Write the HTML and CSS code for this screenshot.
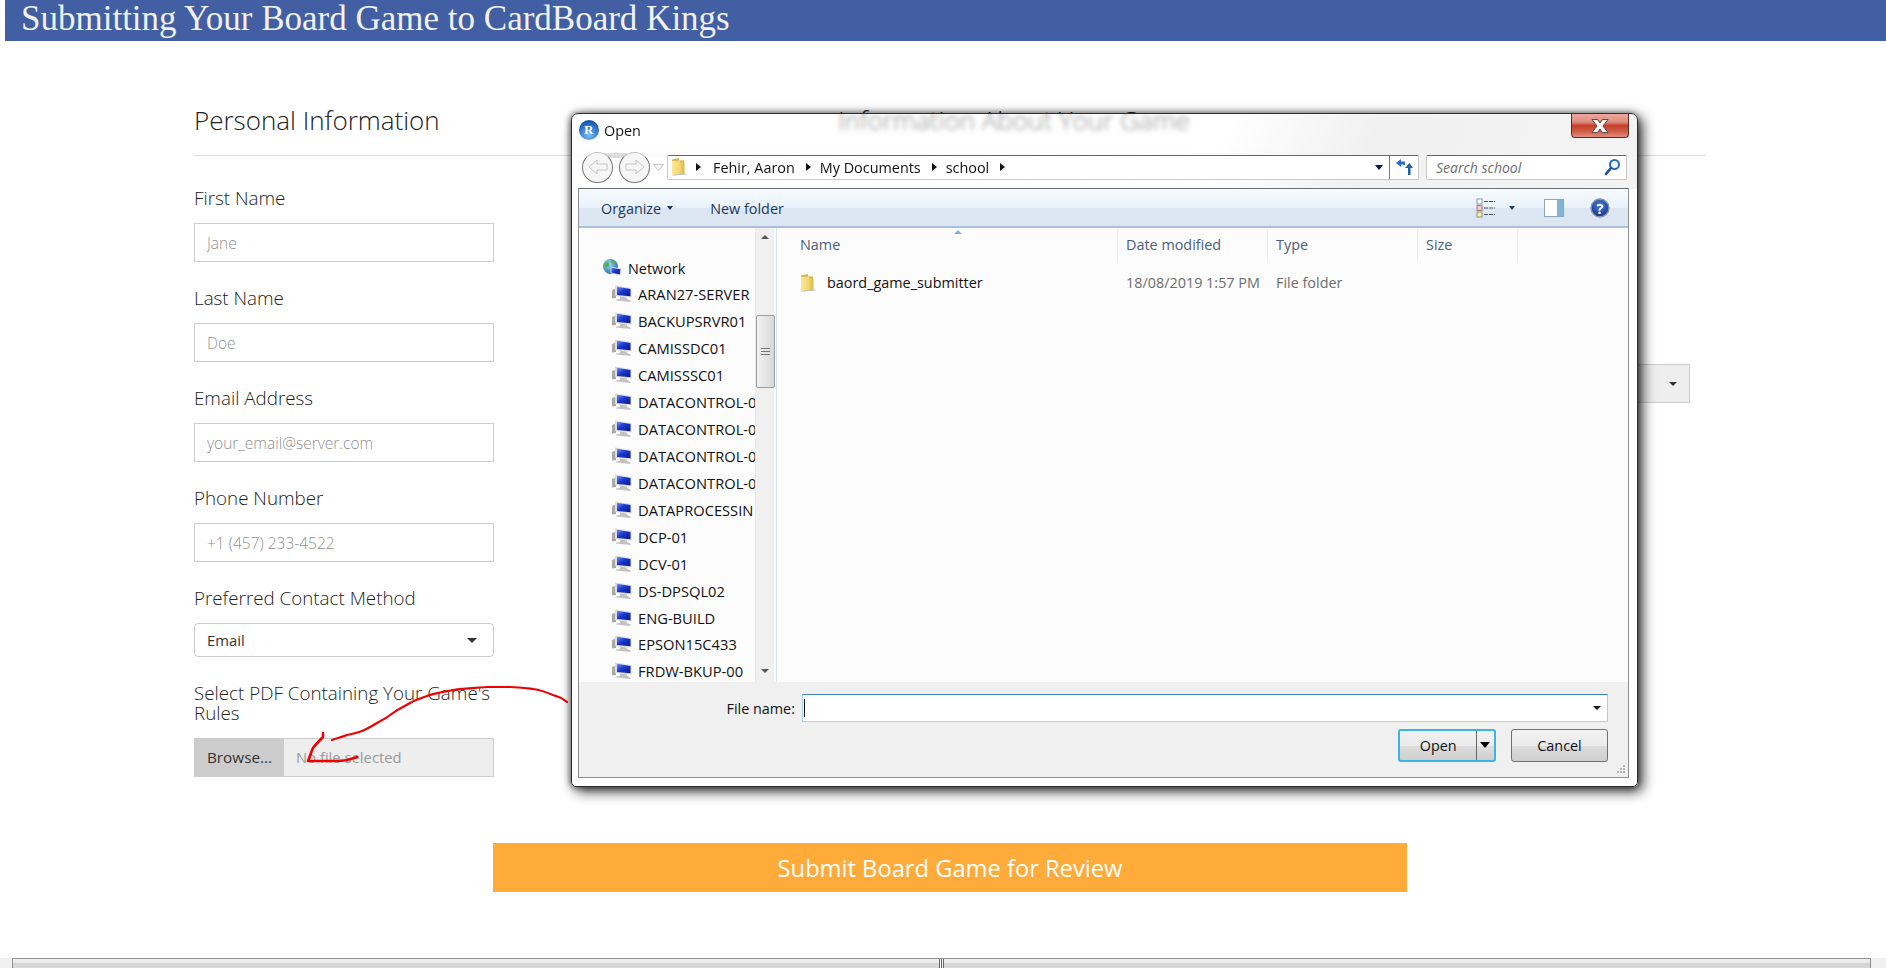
FILE: index.html
```html
<!DOCTYPE html>
<html lang="en">
<head>
    <meta charset="UTF-8">
    <meta name="viewport" content="width=device-width, initial-scale=1.0">
    <title>Submitting Your Board Game to CardBoard Kings</title>
    <link rel="stylesheet" href="styles.css">
</head>
<body>

    <!-- shared icons -->
    <svg class="icon-defs" width="0" height="0" aria-hidden="true">
        <defs>
            <linearGradient id="folderFill" x1="0" y1="0" x2="1" y2="0">
                <stop offset="0" stop-color="#fbe89a"/>
                <stop offset="0.6" stop-color="#f3d76f"/>
                <stop offset="1" stop-color="#d9b64a"/>
            </linearGradient>
            <linearGradient id="screenFill" x1="0" y1="0" x2="1" y2="1">
                <stop offset="0" stop-color="#6f8df0"/>
                <stop offset="0.45" stop-color="#1a36d0"/>
                <stop offset="1" stop-color="#081a80"/>
            </linearGradient>
            <radialGradient id="helpFill" cx="0.5" cy="0.35" r="0.7">
                <stop offset="0" stop-color="#4a7fd8"/>
                <stop offset="1" stop-color="#12308a"/>
            </radialGradient>
            <radialGradient id="globeFill" cx="0.4" cy="0.35" r="0.7">
                <stop offset="0" stop-color="#9fd7f5"/>
                <stop offset="1" stop-color="#1c6fb0"/>
            </radialGradient>
            <symbol id="folder" viewBox="1 1 17 18">
                <path d="M2 2.5 L9 1 L9 3.5 L14 3.5 L14 17 L2 18.5 Z" fill="#d8b44c"/>
                <path d="M2 4 L10 3.5 L10 5.5 L14.5 5.5 L14.5 16.5 L3.5 18.5 L2 18.5 Z" fill="url(#folderFill)"/>
                <path d="M4 18.5 L17.5 17.5 L14.5 16 L4 17.5 Z" fill="#bdbdbd" opacity="0.8"/>
            </symbol>
            <symbol id="computer" viewBox="0 0 20 18">
                <path d="M0 5 L4 3.5 L4 13 L0 13.5 Z" fill="#a9a9a9"/>
                <path d="M3 0.5 L19.5 3 L19.5 12.5 L3 11 Z" fill="#dcdcdc"/>
                <path d="M5 1.8 L18.5 4 L18.5 11.3 L5 10 Z" fill="url(#screenFill)"/>
                <path d="M8 11.5 L15 12.5 L15 14 L18.5 15.5 L18.5 17 L4 15.5 L4 14.5 L8 14 Z" fill="#c2c2c2"/>
            </symbol>
        </defs>
    </svg>

    <header class="site-header">
        <h1>Submitting Your Board Game to CardBoard Kings</h1>
    </header>

    <main class="container">
        <div class="columns">
            <section class="column">
                <h4>Personal Information</h4>
                <div class="fields">
                    <div class="field">
                        <label for="first_name">First Name</label>
                        <input type="text" id="first_name" placeholder="Jane">
                    </div>
                    <div class="field">
                        <label for="last_name">Last Name</label>
                        <input type="text" id="last_name" placeholder="Doe">
                    </div>
                    <div class="field">
                        <label for="email">Email Address</label>
                        <input type="text" id="email" placeholder="your_email@server.com">
                    </div>
                    <div class="field">
                        <label for="phone">Phone Number</label>
                        <input type="text" id="phone" placeholder="+1 (457) 233-4522">
                    </div>
                    <div class="field">
                        <label>Preferred Contact Method</label>
                        <div class="select-box">Email<span class="caret"></span></div>
                    </div>
                    <div class="field">
                        <label class="short">Select PDF Containing Your Game's Rules</label>
                        <div class="file-box">
                            <span class="file-button">Browse...</span>
                            <span class="file-name">No file selected</span>
                        </div>
                    </div>
                </div>
            </section>

            <section class="column column-right">
                <h4>Information About Your Game</h4>
                <div class="fields">
                    <div class="select-box select-disabled"><span class="caret"></span></div>
                </div>
            </section>
        </div>

        <button type="button" class="submit-button">Submit Board Game for Review</button>
    </main>

    <div class="page-scrollbar">
        <div class="page-scrollbar-thumb"><span class="grip"></span></div>
    </div>

    <!-- red pen marks drawn on the screenshot -->
    <svg class="pen-marks" width="580" height="790" viewBox="0 0 580 790" aria-hidden="true">
        <path d="M567 702 C562 698 557 696 553 695 C546 692 540 690 533 689 C525 688 518 687 510 687 C502 687 495 687 487 687 C476 688 465 688 453 690 C444 692 435 693 427 696 C421 698 415 700 410 703 C404 707 399 708 393 713 C388 717 383 720 377 723 C372 726 367 729 362 731 C357 733 352 734 347 735 C342 737 337 738 332 740" fill="none" stroke="#f00000" stroke-width="2.2" stroke-linecap="round"/>
        <path d="M323 733 L323 737 C319 741 316 744 313 748 C311 752 310 757 308 761 C315 761 323 761 330 761 C336 761 342 761 347 760 C351 759 354 758 357 757" fill="none" stroke="#f00000" stroke-width="2.6" stroke-linecap="round" stroke-linejoin="round"/>
    </svg>

    <!-- the Windows file dialog that lies over the form -->
    <div class="dialog">
        <div class="dialog-title">
            <span class="r-logo">R</span>
            <span class="dialog-name">Open</span>
            <span class="close-button">
                <svg width="20" height="16" viewBox="0 0 20 16">
                    <path d="M2 1.5 L7.5 1.5 L10 5 L12.5 1.5 L18 1.5 L13 8 L18 14.5 L12.5 14.5 L10 11 L7.5 14.5 L2 14.5 L7 8 Z" fill="#f4f4f4" stroke="#5a4a4a" stroke-width="1"/>
                </svg>
            </span>
        </div>

        <div class="dialog-nav">
            <div class="nav-buttons">
                <span class="nav-circle">
                    <svg width="22" height="18" viewBox="0 0 22 18"><path d="M10 2 L2 9 L10 16 L10 12 L20 12 L20 6 L10 6 Z" fill="#f7f7f7" stroke="#c4c4c4"/></svg>
                </span>
                <span class="nav-circle">
                    <svg width="22" height="18" viewBox="0 0 22 18"><path d="M12 2 L20 9 L12 16 L12 12 L2 12 L2 6 L12 6 Z" fill="#f7f7f7" stroke="#c4c4c4"/></svg>
                </span>
                <svg class="nav-history" width="11" height="7" viewBox="0 0 11 7"><path d="M0.5 0.5 L10.5 0.5 L5.5 6.5 Z" fill="#fafafa" stroke="#c4c4c4"/></svg>
            </div>
            <div class="address-bar">
                <svg class="crumb-folder" width="17" height="18"><use href="#folder"/></svg>
                <span class="crumb-arrow"></span>
                <span class="crumb">Fehir, Aaron</span>
                <span class="crumb-arrow"></span>
                <span class="crumb">My Documents</span>
                <span class="crumb-arrow"></span>
                <span class="crumb">school</span>
                <span class="crumb-arrow"></span>
                <span class="address-drop"></span>
                <span class="address-refresh">
                    <svg width="18" height="18" viewBox="0 0 18 18">
                        <path d="M1 5 L6 1 L6 3.5 L10 3.5 L10 7 L8 7 L8 6.5 L6 6.5 L6 9 Z" fill="#2a6fc0"/>
                        <path d="M13 17 L13 10 L10 10 L14.5 5 L18 10 L15.5 10 L15.5 17 Z" fill="#1f5fa8"/>
                    </svg>
                </span>
            </div>
            <div class="search-box">
                <span>Search school</span>
                <svg width="17" height="18" viewBox="0 0 17 18">
                    <circle cx="10.5" cy="6.5" r="4.5" fill="#f4f9ff" stroke="#2a6cb0" stroke-width="2"/>
                    <path d="M7 10 L2 16" stroke="#1d4f8a" stroke-width="2.6" stroke-linecap="round"/>
                </svg>
            </div>
        </div>

        <div class="dialog-panel">
            <div class="toolbar">
                <span class="tool">Organize<span class="tool-caret"></span></span>
                <span class="tool tool-new">New folder</span>
                <div class="toolbar-right">
                    <svg width="20" height="20" viewBox="0 0 20 20">
                        <rect x="1" y="1" width="5" height="5" fill="#fff" stroke="#8c9aac"/>
                        <rect x="1" y="7.5" width="5" height="5" fill="#f6c9c0" stroke="#a08080"/>
                        <rect x="1" y="14" width="5" height="5" fill="#f4efb0" stroke="#98986c"/>
                        <path d="M8 3.5 H19 M8 10 H19 M8 16.5 H19" stroke="#44566c" stroke-width="1.2" stroke-dasharray="4 1"/>
                    </svg>
                    <span class="tool-caret view-caret"></span>
                    <svg class="pane-icon" width="20" height="18" viewBox="0 0 20 18">
                        <rect x="0.5" y="0.5" width="19" height="17" fill="#fff" stroke="#8ca4bc"/>
                        <rect x="13" y="1" width="6" height="16" fill="#7fb6d8"/>
                    </svg>
                    <span class="help-icon">
                        <svg width="20" height="20" viewBox="0 0 20 20">
                            <circle cx="10" cy="10" r="9" fill="url(#helpFill)" stroke="#8d98a8" stroke-width="1.4"/>
                        </svg>
                        <span class="help-mark">?</span>
                    </span>
                </div>
            </div>

            <div class="browser">
                <div class="nav-pane">
                    <div class="nav-list">
                        <div class="nav-network">
                            <svg width="20" height="20" viewBox="0 0 20 20">
                                <circle cx="8.5" cy="8.5" r="7.5" fill="url(#globeFill)"/>
                                <path d="M3 5 C6 3 8 5 7 8 C5 10 3 9 2 7 Z M9 2 C12 2 14 4 13 6 C11 6 9 5 9 2 Z" fill="#4caf50"/>
                                <path d="M9 9 L19 11 L18 17 L9 15 Z" fill="url(#screenFill)" stroke="#d6d6d6"/>
                            </svg>
                            <span>Network</span>
                        </div>
                        <div class="nav-item"><svg width="20" height="18"><use href="#computer"/></svg><span>ARAN27-SERVER</span></div>
                        <div class="nav-item"><svg width="20" height="18"><use href="#computer"/></svg><span>BACKUPSRVR01</span></div>
                        <div class="nav-item"><svg width="20" height="18"><use href="#computer"/></svg><span>CAMISSDC01</span></div>
                        <div class="nav-item"><svg width="20" height="18"><use href="#computer"/></svg><span>CAMISSSC01</span></div>
                        <div class="nav-item"><svg width="20" height="18"><use href="#computer"/></svg><span>DATACONTROL-0</span></div>
                        <div class="nav-item"><svg width="20" height="18"><use href="#computer"/></svg><span>DATACONTROL-0</span></div>
                        <div class="nav-item"><svg width="20" height="18"><use href="#computer"/></svg><span>DATACONTROL-0</span></div>
                        <div class="nav-item"><svg width="20" height="18"><use href="#computer"/></svg><span>DATACONTROL-0</span></div>
                        <div class="nav-item"><svg width="20" height="18"><use href="#computer"/></svg><span>DATAPROCESSIN</span></div>
                        <div class="nav-item"><svg width="20" height="18"><use href="#computer"/></svg><span>DCP-01</span></div>
                        <div class="nav-item"><svg width="20" height="18"><use href="#computer"/></svg><span>DCV-01</span></div>
                        <div class="nav-item"><svg width="20" height="18"><use href="#computer"/></svg><span>DS-DPSQL02</span></div>
                        <div class="nav-item"><svg width="20" height="18"><use href="#computer"/></svg><span>ENG-BUILD</span></div>
                        <div class="nav-item"><svg width="20" height="18"><use href="#computer"/></svg><span>EPSON15C433</span></div>
                        <div class="nav-item"><svg width="20" height="18"><use href="#computer"/></svg><span>FRDW-BKUP-00</span></div>
                    </div>
                    <div class="nav-scroll">
                        <span class="scroll-up"></span>
                        <span class="scroll-thumb"><span class="grip-lines"></span></span>
                        <span class="scroll-down"></span>
                    </div>
                </div>

                <div class="file-pane">
                    <span class="sort-mark"></span>
                    <div class="file-columns file-head">
                        <span>Name</span>
                        <span>Date modified</span>
                        <span>Type</span>
                        <span>Size</span>
                    </div>
                    <div class="file-columns file-row">
                        <span class="file-title"><svg width="17" height="18"><use href="#folder"/></svg>baord_game_submitter</span>
                        <span>18/08/2019 1:57 PM</span>
                        <span>File folder</span>
                        <span></span>
                    </div>
                </div>
            </div>

            <div class="dialog-footer">
                <div class="name-row">
                    <span class="name-label">File name:</span>
                    <div class="name-input"><span class="text-cursor"></span><span class="name-drop"></span></div>
                </div>
                <div class="button-row">
                    <span class="win-button win-open"><span class="open-text">Open</span><span class="open-split"></span></span>
                    <span class="win-button win-cancel">Cancel</span>
                </div>
                <svg class="resize-grip" width="11" height="11" viewBox="0 0 11 11">
                    <path d="M9 1h2v2H9z M6 4h2v2H6z M9 4h2v2H9z M3 7h2v2H3z M6 7h2v2H6z M9 7h2v2H9z" fill="#b4b4b4"/>
                </svg>
            </div>
        </div>
    </div>

</body>
</html>
```

FILE: styles.css
```css
html, body {
    height: 100%;
}
body {
    margin: 0;
    padding-left: 5px;
    box-sizing: border-box;
    overflow: hidden;
    display: flex;
    flex-direction: column;
    position: relative;
    font-family: "Open Sans", Arial, sans-serif;
    color: #222;
    background-color: #fff;
}
.icon-defs {
    position: absolute;
}

/* page */
.site-header {
    height: 41px;
    flex: none;
    background-color: #415fa2;
}
h1 {
    margin: 0;
    padding-left: 16px;
    font-family: "Liberation Serif", "Times New Roman", serif;
    font-size: 35px;
    font-weight: 400;
    line-height: 37px;
    color: #f1f1f1;
}
.container {
    width: 1512px;
    margin: 64px 0 0 189px;
    flex: none;
}
.columns {
    display: grid;
    grid-template-columns: 644px 1fr;
}
h4 {
    margin: 0;
    height: 30px;
    padding-bottom: 20px;
    font-size: 26px;
    font-weight: 300;
    line-height: 30px;
    color: #222;
    border-bottom: 1px solid #ddd;
}
.fields {
    padding-top: 32px;
}
.field {
    width: 300px;
    margin-bottom: 26px;
}
label {
    display: block;
    margin-bottom: 15px;
    font-size: 18.8px;
    font-weight: 300;
    line-height: 20px;
    color: #222;
}
input {
    display: block;
    width: 100%;
    height: 39px;
    box-sizing: border-box;
    padding: 0 12px;
    border: 1.5px solid #ccc;
    border-radius: 0;
    background-color: #fff;
    font-family: "Open Sans", Arial, sans-serif;
    font-size: 15.5px;
    font-weight: 300;
    outline: none;
}
input::placeholder {
    color: #8f8f8f;
}
.select-box {
    height: 34px;
    box-sizing: border-box;
    padding: 0 12px;
    display: flex;
    align-items: center;
    justify-content: space-between;
    border: 1px solid #ccc;
    border-radius: 4px;
    font-size: 14.8px;
    color: #333;
}
.caret {
    width: 0;
    height: 0;
    margin-right: 4px;
    border-left: 5px solid transparent;
    border-right: 5px solid transparent;
    border-top: 5px solid #333;
}
.select-disabled {
    height: 39px;
    margin: 176px 16px 0 0;
    padding-right: 12px;
    border-radius: 0;
    justify-content: flex-end;
    background-color: #eee;
}
.select-disabled .caret {
    margin-right: 0;
    border-left-width: 4.5px;
    border-right-width: 4.5px;
    border-top-width: 4.5px;
}
.file-box {
    height: 39px;
    box-sizing: border-box;
    display: flex;
    border: 1px solid #ccc;
    background-color: #eee;
    font-size: 14.8px;
}
.file-button {
    width: 89px;
    padding-bottom: 2px;
    box-sizing: border-box;
    display: flex;
    align-items: center;
    justify-content: center;
    background-color: #ccc;
    color: #333;
    font-size: 15.3px;
}
.file-name {
    padding: 0 0 2px 12px;
    display: flex;
    align-items: center;
    color: #9a9a9a;
}
.submit-button {
    display: block;
    width: 914px;
    height: 49px;
    margin: 40px auto 0;
    padding: 0;
    border: none;
    background-color: #ffab3a;
    color: #fff;
    font-family: "Open Sans", Arial, sans-serif;
    font-size: 23.7px;
    font-weight: 400;
}
.page-scrollbar {
    height: 10px;
    flex: none;
    margin: auto 0 0 -5px;
    padding: 0 15px 0 12px;
    background-color: #f0f0f0;
}
.page-scrollbar-thumb {
    height: 10px;
    box-sizing: border-box;
    border: 1px solid #8f8f8f;
    border-bottom: 0;
    background: linear-gradient(#f0f0f0 0, #e8e8e8 45%, #d6d6d6 46%, #d6d6d6 100%);
    display: flex;
    justify-content: center;
}
.grip {
    width: 5px;
    height: 9px;
    background: repeating-linear-gradient(90deg, #666 0 1px, #f4f4f4 1px 2px);
}
.pen-marks {
    position: absolute;
    left: 0;
    top: 0;
    pointer-events: none;
}

/* file dialog */
.dialog {
    position: absolute;
    left: 571px;
    top: 113px;
    width: 1067px;
    height: 674px;
    box-sizing: border-box;
    padding: 0 8px 0 6px;
    border: 1px solid #2e2e2e;
    border-radius: 7px 7px 5px 5px;
    box-shadow: 4px 4px 13px rgba(0, 0, 0, 0.85), -1px 0 6px rgba(0, 0, 0, 0.5);
    backdrop-filter: blur(2.5px);
    background:
        linear-gradient(113deg, rgba(255, 255, 255, 0.45) 0, rgba(255, 255, 255, 0.5) 60%, rgba(238, 238, 238, 0.85) 74%, rgba(242, 242, 242, 0.85) 100%) 0 0 / 100% 75px no-repeat,
        linear-gradient(#fff, #fff) 0 75px / 100% 100% no-repeat;
    font-size: 14.4px;
    color: #111;
}
.dialog-title {
    height: 37px;
    display: flex;
    align-items: flex-start;
}
.r-logo {
    width: 20px;
    height: 20px;
    margin: 6px 0 0 1px;
    border-radius: 50%;
    background: radial-gradient(circle at 50% 75%, #7cc0f5, #1257b8 75%);
    color: #fff;
    font-family: "Liberation Serif", serif;
    font-size: 13px;
    font-weight: 700;
    line-height: 20px;
    text-align: center;
}
.dialog-name {
    margin: 7px 0 0 5px;
    line-height: 20px;
}
.close-button {
    width: 58px;
    height: 24px;
    margin-left: auto;
    box-sizing: border-box;
    display: flex;
    align-items: center;
    justify-content: center;
    border: 1px solid #5c2a22;
    border-top: 0;
    border-radius: 0 0 4px 4px;
    background: linear-gradient(#eea99c 0, #dd8d7e 35%, #c8402a 50%, #d05a45 75%, #e08f7f 100%);
}
.dialog-nav {
    height: 32px;
    display: flex;
    align-items: center;
}
.nav-buttons {
    position: relative;
    width: 89px;
    padding-left: 4px;
    box-sizing: border-box;
    display: flex;
    align-items: center;
    gap: 6px;
}
.nav-buttons::before {
    content: "";
    position: absolute;
    left: 18px;
    top: 1px;
    width: 34px;
    height: 5px;
    border-radius: 5px 5px 0 0;
    background-color: #dcdcdc;
}
.nav-circle {
    position: relative;
    width: 31px;
    height: 31px;
    box-sizing: border-box;
    display: flex;
    align-items: center;
    justify-content: center;
    border: 1.5px solid #777;
    border-top-color: #c2c2c2;
    border-radius: 50%;
    background: #f6f6f6;
}
.nav-history {
    margin-left: -3px;
}
.address-bar {
    width: 752px;
    height: 25px;
    box-sizing: border-box;
    display: flex;
    align-items: center;
    padding-left: 3px;
    border: 1px solid #c8c8c8;
    border-top-color: #666;
    border-radius: 2px;
    background-color: #fff;
}
.crumb-folder {
    margin-right: 8px;
}
.crumb-arrow {
    width: 0;
    height: 0;
    margin: 0 9px 0 0;
    border-top: 4.5px solid transparent;
    border-bottom: 4.5px solid transparent;
    border-left: 5px solid #111;
}
.crumb-folder + .crumb-arrow {
    margin-right: 12px;
}
.crumb {
    margin-right: 11px;
    white-space: nowrap;
}
.address-drop {
    width: 0;
    height: 0;
    margin-left: auto;
    margin-right: 6px;
    border-left: 4.5px solid transparent;
    border-right: 4.5px solid transparent;
    border-top: 5px solid #0b1252;
}
.address-refresh {
    width: 28px;
    height: 23px;
    display: flex;
    align-items: center;
    justify-content: center;
    border-left: 1px solid #777;
}
.search-box {
    width: 201px;
    height: 25px;
    margin-left: 7px;
    box-sizing: border-box;
    display: flex;
    align-items: center;
    justify-content: space-between;
    padding: 0 5px 0 9px;
    border: 1px solid #c8c8c8;
    border-top-color: #666;
    border-radius: 2px;
    background-color: #fff;
    font-size: 14px;
    font-style: italic;
    color: #6d6d6d;
}
.dialog-panel {
    height: 590px;
    margin-top: 5px;
    box-sizing: border-box;
    display: flex;
    flex-direction: column;
    border: 1px solid #8e8e8e;
    border-top-color: #6d6d6d;
    background-color: #fcfcfc;
}
.toolbar {
    height: 39px;
    flex: none;
    box-sizing: border-box;
    display: flex;
    align-items: center;
    padding: 1px 0 0 22px;
    border-bottom: 2px solid #a9c0dd;
    background: linear-gradient(#f6fbff 0, #e9f2fb 50%, #dde7f4 51%, #dce6f3 100%);
    color: #1e395b;
}
.tool {
    display: flex;
    align-items: center;
}
.tool-new {
    margin-left: 37px;
}
.tool-caret {
    width: 0;
    height: 0;
    margin-left: 6px;
    border-left: 3.5px solid transparent;
    border-right: 3.5px solid transparent;
    border-top: 4px solid #1e395b;
}
.toolbar-right {
    margin-left: auto;
    padding-right: 18px;
    display: flex;
    align-items: center;
}
.view-caret {
    margin-left: 13px;
}
.pane-icon {
    margin-left: 29px;
}
.help-icon {
    width: 20px;
    height: 20px;
    margin-left: 26px;
    position: relative;
}
.help-mark {
    position: absolute;
    inset: 0;
    color: #fff;
    font-size: 15px;
    font-weight: 700;
    line-height: 20px;
    text-align: center;
}
.browser {
    height: 454px;
    flex: none;
    display: flex;
}
.nav-pane {
    width: 198px;
    flex: none;
    box-sizing: border-box;
    display: flex;
    padding-right: 2px;
    border-right: 1px solid #d6e5f5;
    background-color: #fcfcfc;
}
.nav-list {
    width: 176px;
    height: 454px;
    overflow: hidden;
    padding-top: 27px;
    box-sizing: border-box;
    font-size: 14.7px;
}
.nav-network {
    height: 26px;
    padding-left: 23px;
    display: flex;
    align-items: center;
    gap: 6px;
    font-size: 14.4px;
}
.nav-item {
    height: 26.93px;
    padding-left: 33px;
    display: flex;
    align-items: center;
    gap: 6px;
    white-space: nowrap;
}
.nav-item svg, .nav-network svg {
    flex: none;
}
.nav-scroll {
    width: 19px;
    flex: none;
    height: 454px;
    box-sizing: border-box;
    display: flex;
    flex-direction: column;
    align-items: center;
    background-color: #f0f0f0;
    border-left: 1px solid #e8e8e8;
}
.scroll-up {
    width: 0;
    height: 0;
    margin-top: 7px;
    border-left: 4.5px solid transparent;
    border-right: 4.5px solid transparent;
    border-bottom: 4.5px solid #555;
}
.scroll-thumb {
    width: 19px;
    height: 73px;
    margin-top: 76px;
    box-sizing: border-box;
    display: flex;
    align-items: center;
    justify-content: center;
    border: 1px solid #9d9d9d;
    border-radius: 2px;
    background: linear-gradient(90deg, #f2f2f2, #d8d8d8);
}
.grip-lines {
    width: 9px;
    height: 8px;
    background: repeating-linear-gradient(#777 0 1px, transparent 1px 3px);
}
.scroll-down {
    width: 0;
    height: 0;
    margin-top: auto;
    margin-bottom: 9px;
    border-left: 4.5px solid transparent;
    border-right: 4.5px solid transparent;
    border-top: 4.5px solid #555;
}
.file-pane {
    flex: 1;
    position: relative;
    background-color: #fcfcfc;
}
.sort-mark {
    position: absolute;
    left: 177px;
    top: 2px;
    width: 0;
    height: 0;
    border-left: 4px solid transparent;
    border-right: 4px solid transparent;
    border-bottom: 4px solid #7fb2dc;
}
.file-columns {
    display: grid;
    grid-template-columns: 341px 150px 150px 100px;
}
.file-columns span {
    padding-left: 8px;
    white-space: nowrap;
}
.file-columns span:first-child {
    padding-left: 23px;
}
.file-head {
    height: 28px;
    margin-top: 1px;
    align-items: stretch;
    color: #4c607a;
}
.file-head span {
    line-height: 32px;
    border-right: 1px solid #e3ecf7;
}
.file-row {
    margin-top: 14px;
    height: 24px;
    line-height: 24px;
    color: #6d6d6d;
}
.file-columns .file-title {
    padding-left: 26px;
    display: flex;
    align-items: center;
    gap: 10px;
    color: #111;
}
.dialog-footer {
    flex: 1;
    position: relative;
    padding: 12px 20px 0 0;
    background-color: #f0f0f0;
}
.name-row {
    display: flex;
    justify-content: flex-end;
    align-items: center;
    gap: 7px;
}
.name-input {
    width: 806px;
    height: 28px;
    box-sizing: border-box;
    display: flex;
    align-items: center;
    justify-content: space-between;
    padding: 0 6px 0 1px;
    border: 1px solid #a6d2ee;
    border-top-color: #3f86bd;
    background-color: #fff;
}
.text-cursor {
    width: 1px;
    height: 18px;
    background-color: #111;
}
.name-drop {
    width: 0;
    height: 0;
    border-left: 4px solid transparent;
    border-right: 4px solid transparent;
    border-top: 4.5px solid #111;
}
.button-row {
    margin: 7px 0 0 0;
    display: flex;
    justify-content: flex-end;
    gap: 15px;
}
.win-button {
    height: 33px;
    box-sizing: border-box;
    display: flex;
    align-items: center;
    border: 1px solid #707070;
    border-radius: 3px;
    background: linear-gradient(#f2f2f2 0, #ebebeb 50%, #dddddd 51%, #cfcfcf 100%);
    color: #111;
}
.win-cancel {
    width: 97px;
    justify-content: center;
}
.win-open {
    width: 98px;
    border: 2px solid #3cb4e4;
}
.open-text {
    width: 78px;
    text-align: center;
}
.open-split {
    position: relative;
    width: 18px;
    height: 100%;
    box-sizing: border-box;
    border-left: 1px solid #666;
}
.open-split::after {
    content: "";
    position: absolute;
    left: 3px;
    top: 11px;
    border-left: 5px solid transparent;
    border-right: 5px solid transparent;
    border-top: 6px solid #000;
}
.resize-grip {
    position: absolute;
    right: 3px;
    bottom: 2px;
}
```
